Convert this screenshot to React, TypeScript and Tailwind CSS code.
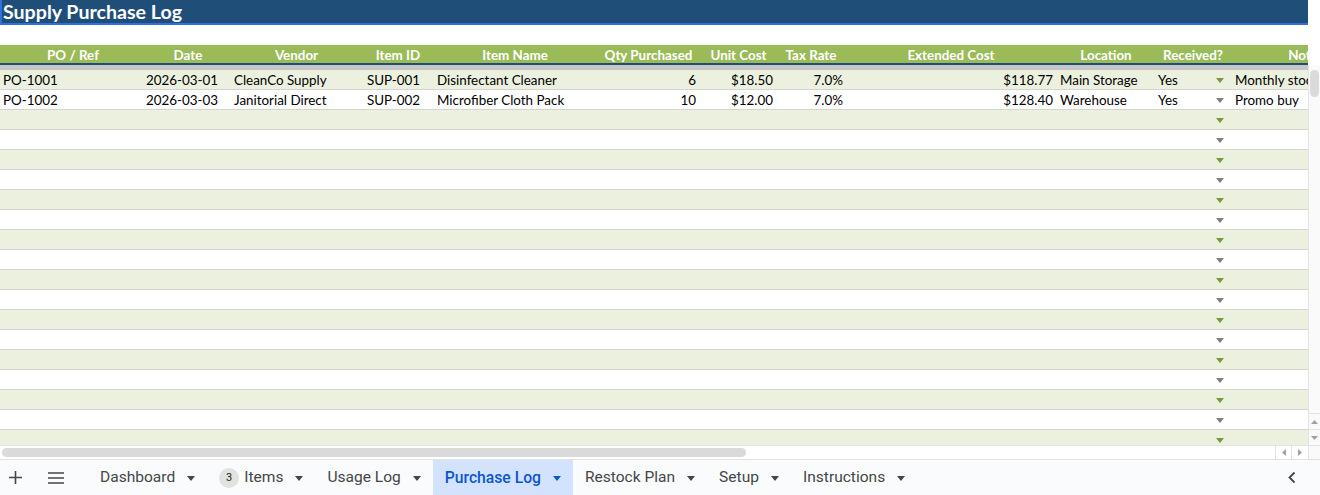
import React from 'react';

type Col = {
  key: string;
  label: string;
  w: number;
  align: 'left' | 'right';
  pad: string;
};

const COLS: Col[] = [
  { key: 'po', label: 'PO / Ref', w: 146, align: 'left', pad: 'pl-[3px]' },
  { key: 'date', label: 'Date', w: 84, align: 'right', pad: 'pr-[12px]' },
  { key: 'vendor', label: 'Vendor', w: 133, align: 'left', pad: 'pl-[4px]' },
  { key: 'itemId', label: 'Item ID', w: 70, align: 'left', pad: 'pl-[4px]' },
  { key: 'itemName', label: 'Item Name', w: 164, align: 'left', pad: 'pl-[4px]' },
  { key: 'qty', label: 'Qty Purchased', w: 103, align: 'right', pad: 'pr-[4px]' },
  { key: 'unit', label: 'Unit Cost', w: 77, align: 'right', pad: 'pr-[4px]' },
  { key: 'tax', label: 'Tax Rate', w: 68, align: 'right', pad: 'pr-[2px]' },
  { key: 'ext', label: 'Extended Cost', w: 212, align: 'right', pad: 'pr-[4px]' },
  { key: 'loc', label: 'Location', w: 98, align: 'left', pad: 'pl-[3px]' },
  { key: 'recv', label: 'Received?', w: 76, align: 'left', pad: 'pl-[3px]' },
  { key: 'notes', label: 'Notes', w: 150, align: 'left', pad: 'pl-[4px]' },
];

const DATA: Record<string, string>[] = [
  {
    po: 'PO-1001', date: '2026-03-01', vendor: 'CleanCo Supply', itemId: 'SUP-001',
    itemName: 'Disinfectant Cleaner', qty: '6', unit: '$18.50', tax: '7.0%',
    ext: '$118.77', loc: 'Main Storage', recv: 'Yes', notes: 'Monthly stock',
  },
  {
    po: 'PO-1002', date: '2026-03-03', vendor: 'Janitorial Direct', itemId: 'SUP-002',
    itemName: 'Microfiber Cloth Pack', qty: '10', unit: '$12.00', tax: '7.0%',
    ext: '$128.40', loc: 'Warehouse', recv: 'Yes', notes: 'Promo buy',
  },
];

const TABS = ['Dashboard', 'Items', 'Usage Log', 'Purchase Log', 'Restock Plan', 'Setup', 'Instructions'];

function Caret({ color }: { color: string }) {
  return (
    <svg width="8" height="5" viewBox="0 0 8 5" className="shrink-0">
      <path d="M0 0h8L4 5z" fill={color} />
    </svg>
  );
}

function SheetRow({ idx }: { idx: number }) {
  const row = DATA[idx];
  const green = idx % 2 === 0;
  return (
    <div
      className={`flex h-[20px] shrink-0 border-b border-[#d4d4d4] ${green ? 'bg-[#ebf1de]' : 'bg-white'}`}
    >
      {COLS.map((c) => (
        <div
          key={c.key}
          style={{ width: c.w }}
          className={`shrink-0 flex items-center whitespace-nowrap overflow-hidden pt-[2px] ${c.pad} ${
            c.align === 'right' ? 'justify-end' : 'justify-start'
          }`}
        >
          {c.key === 'recv' ? (
            <div className="flex w-full items-center justify-between pr-[7px]">
              <span>{row ? row.recv : ''}</span>
              <Caret color={green ? '#7a9a3a' : '#7f7f7f'} />
            </div>
          ) : (
            <span>{row ? row[c.key] : ''}</span>
          )}
        </div>
      ))}
    </div>
  );
}

export default function App() {
  return (
    <div className="w-[1320px] h-[495px] flex flex-col overflow-hidden bg-white">
      <div className="flex h-[459px] shrink-0">
        {/* grid */}
        <div
          className="w-[1308px] shrink-0 flex flex-col overflow-hidden text-[13.4px] text-black"
          style={{ fontFamily: 'Lato, "Open Sans", sans-serif' }}
        >
          <div className="h-[25px] shrink-0 bg-[#1f4e79] border-b-2 border-l-2 border-[#2f6fde] pl-[1px] flex items-center text-white font-bold text-[19.6px] leading-none">
            Supply Purchase Log
          </div>
          <div className="h-[20px] shrink-0 bg-white" />
          <div className="flex h-[20px] shrink-0 bg-[#9bbb59] border-b-2 border-[#1f4e79] text-white font-bold">
            {COLS.map((c) => (
              <div
                key={c.key}
                style={{ width: c.w }}
                className="shrink-0 flex items-center justify-center whitespace-nowrap pt-[3px]"
              >
                {c.label}
              </div>
            ))}
          </div>
          <div className="h-[5px] shrink-0 bg-[#c6c6c6]" />
          <div className="flex-1 overflow-hidden flex flex-col">
            {Array.from({ length: 19 }).map((_, i) => (
              <SheetRow key={i} idx={i} />
            ))}
          </div>
          {/* horizontal scrollbar */}
          <div className="h-[14px] shrink-0 bg-white border-t border-[#e3e3e3] flex items-center">
            <div className="ml-[2px] w-[744px] h-[9px] rounded-full bg-[#dadada]" />
            <div className="flex-1" />
            <div className="flex h-full border-l border-[#e3e3e3]">
              <div className="w-[16px] flex items-center justify-center border-r border-[#e3e3e3]">
                <svg width="4" height="7" viewBox="0 0 4 7"><path d="M4 0v7L0 3.5z" fill="#a0a0a0" /></svg>
              </div>
              <div className="w-[16px] flex items-center justify-center">
                <svg width="4" height="7" viewBox="0 0 4 7"><path d="M0 0v7l4-3.5z" fill="#a0a0a0" /></svg>
              </div>
            </div>
          </div>
        </div>
        {/* vertical scrollbar */}
        <div className="w-[12px] shrink-0 flex flex-col bg-[#fafafa]">
          <div className="h-[65px] shrink-0 bg-white" />
          <div className="flex-1 border-l border-[#e3e3e3] flex flex-col items-center">
            <div className="mt-[5px] w-[9px] h-[27px] rounded-full bg-[#dadada]" />
            <div className="flex-1" />
            <div className="w-full h-[16px] border-t border-[#e3e3e3] flex items-center justify-center">
              <svg width="7" height="4" viewBox="0 0 7 4"><path d="M0 4h7L3.5 0z" fill="#a0a0a0" /></svg>
            </div>
            <div className="w-full h-[16px] border-t border-[#e3e3e3] flex items-center justify-center">
              <svg width="7" height="4" viewBox="0 0 7 4"><path d="M0 0h7L3.5 4z" fill="#a0a0a0" /></svg>
            </div>
            <div className="w-full h-[14px] border-t border-[#e3e3e3]" />
          </div>
        </div>
      </div>

      {/* sheet tabs */}
      <div
        className="h-[36px] shrink-0 flex items-stretch bg-[#f9fbfd] border-t border-[#e1e3e1] text-[15.55px] text-[#444746]"
        style={{ fontFamily: 'Roboto, "Noto Sans", sans-serif' }}
      >
        <div className="w-[30px] flex items-center justify-center">
          <svg width="13" height="13" viewBox="0 0 13 13">
            <path d="M6.5 0v13M0 6.5h13" stroke="#444746" strokeWidth="1.6" />
          </svg>
        </div>
        <div className="w-[52px] flex items-center justify-center">
          <svg width="16" height="12" viewBox="0 0 16 12">
            <path d="M0 1h16M0 6h16M0 11h16" stroke="#444746" strokeWidth="1.6" />
          </svg>
        </div>
        <div className="w-[6px]" />
        {TABS.map((t) => {
          const active = t === 'Purchase Log';
          return (
            <div
              key={t}
              className={`flex items-center px-3 pt-[1px] ${active ? 'bg-[#d3e3fd] text-[#0b57d0] font-medium text-[15.7px]' : ''}`}
            >
              {t === 'Items' && (
                <span className="mr-[5px] w-[20px] h-[20px] rounded-full bg-[#e1e3e1] flex items-center justify-center text-[11px] text-[#1f1f1f]">
                  3
                </span>
              )}
              <span>{t}</span>
              <span className="ml-3">
                <Caret color={active ? '#0b57d0' : '#444746'} />
              </span>
            </div>
          );
        })}
        <div className="flex-1" />
        <div className="w-[56px] flex items-center justify-center">
          <svg width="8" height="13" viewBox="0 0 8 13">
            <path d="M6.5 1.5L1.5 6.5l5 5" stroke="#444746" strokeWidth="1.8" fill="none" />
          </svg>
        </div>
      </div>
    </div>
  );
}
